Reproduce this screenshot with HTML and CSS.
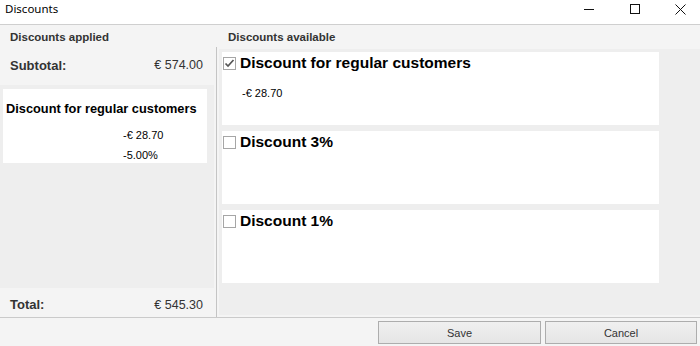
FILE: index.html
```html
<!DOCTYPE html>
<html lang="en">
<head>
  <meta charset="UTF-8">
  <title>Discounts</title>
  <link rel="stylesheet" href="styles.css">
</head>
<body>
  <div class="window">
    <div class="titlebar">
      <span class="title">Discounts</span>
      <div class="controls">
        <span class="ctl">
          <svg width="10" height="10" viewBox="0 0 10 10"><line x1="0" y1="5.5" x2="10" y2="5.5"/></svg>
        </span>
        <span class="ctl">
          <svg width="10" height="10" viewBox="0 0 10 10"><rect x="0.5" y="0.5" width="9" height="9"/></svg>
        </span>
        <span class="ctl">
          <svg width="11" height="11" viewBox="0 0 11 11"><path d="M0.5 0.5 L10.5 10.5 M10.5 0.5 L0.5 10.5"/></svg>
        </span>
      </div>
    </div>

    <div class="main">
      <!-- left: applied -->
      <div class="applied">
        <div class="head">Discounts applied</div>
        <div class="sum-row subtotal">
          <span class="sum-label">Subtotal:</span>
          <span class="sum-amount">€ 574.00</span>
        </div>
        <div class="applied-list">
          <div class="applied-card">
            <div class="applied-title">Discount for regular customers</div>
            <div class="applied-values">
              <div>-€ 28.70</div>
              <div>-5.00%</div>
            </div>
          </div>
        </div>
        <div class="sum-row total">
          <span class="sum-label">Total:</span>
          <span class="sum-amount">€ 545.30</span>
        </div>
      </div>

      <div class="splitter"><div class="splitter-line"></div></div>

      <!-- right: available -->
      <div class="available">
        <div class="head">Discounts available</div>
        <div class="available-list">
          <div class="offer">
            <div class="offer-title">
              <span class="check">
                <svg width="11" height="11" viewBox="0 0 11 11"><path d="M1.5 5.5 L4 8 L9.5 2"/></svg>
              </span>
              Discount for regular customers
            </div>
            <div class="offer-value">-€ 28.70</div>
          </div>
          <div class="offer">
            <div class="offer-title"><span class="check"></span>Discount 3%</div>
          </div>
          <div class="offer">
            <div class="offer-title"><span class="check"></span>Discount 1%</div>
          </div>
        </div>
      </div>
    </div>

    <div class="footer">
      <button class="btn btn-save">Save</button>
      <button class="btn btn-cancel">Cancel</button>
    </div>
  </div>
</body>
</html>
```

FILE: styles.css
```css
/* reset */
*{
  margin: 0;
  padding: 0;
  box-sizing: border-box;
}
body{
  font-family: "Liberation Sans", Arial, sans-serif;
  background-color: #f4f4f4;
  color: #333;
}
.window{
  width: 700px;
  height: 346px;
  display: flex;
  flex-direction: column;
  overflow: hidden;
}

/* title bar */
.titlebar{
  height: 25px;
  background-color: #fff;
  border-bottom: 1px solid #cfcfcf;
  display: flex;
  align-items: flex-start;
}
.title{
  font-family: "Noto Sans", sans-serif;
  font-size: 11.5px;
  color: #000;
  padding: 1px 0 0 5px;
  line-height: 16px;
  flex: 1;
}
.controls{
  display: flex;
}
.ctl{
  width: 46px;
  height: 18px;
  display: flex;
  justify-content: center;
  align-items: center;
  padding-left: 7px;
}
.ctl svg{
  fill: none;
  stroke: #111;
  stroke-width: 1;
}

/* main area */
.main{
  flex: 1;
  display: flex;
}
.head{
  height: 23px;
  display: flex;
  align-items: center;
  font-size: 11.5px;
  font-weight: bold;
  color: #333;
}

/* applied */
.applied{
  width: 214px;
  display: flex;
  flex-direction: column;
}
.applied .head{
  padding-left: 10px;
}
.sum-row{
  display: flex;
  justify-content: space-between;
  align-items: center;
  padding: 0 11px 0 10px;
}
.subtotal{
  height: 37px;
  padding-bottom: 3px;
}
.total{
  height: 29px;
  padding-top: 4px;
}
.sum-label{
  font-size: 13px;
  font-weight: bold;
}
.sum-amount{
  font-size: 12.5px;
}
.applied-list{
  flex: 1;
  background-color: #eee;
  padding: 4px 7px 0 3px;
}
.applied-card{
  height: 74px;
  background-color: #fff;
  padding: 12px 3px 0 3px;
  color: #000;
}
.applied-title{
  font-size: 12.8px;
  font-weight: bold;
  line-height: 16px;
  white-space: nowrap;
}
.applied-values{
  margin: 8px 0 0 117px;
  font-size: 11px;
  line-height: 20px;
}

/* splitter */
.splitter{
  width: 5px;
  display: flex;
  flex-direction: column;
}
.splitter-line{
  flex: 1;
  width: 1px;
  margin: 22px 0 0 2px;
  background-color: #c4c4c4;
}

/* available */
.available{
  flex: 1;
  display: flex;
  flex-direction: column;
  padding-bottom: 2px;
}
.available .head{
  height: 24px;
  padding: 0 0 1px 9px;
}
.available-list{
  flex: 1;
  background-color: #eee;
  padding: 3px 41px 0 3px;
  display: flex;
  flex-direction: column;
  gap: 6px;
}
.offer{
  height: 73px;
  background-color: #fff;
  padding: 2px 0 0 1px;
  color: #000;
}
.offer-title{
  display: flex;
  align-items: center;
  font-size: 15.5px;
  font-weight: bold;
  line-height: 18px;
  white-space: nowrap;
}
.check{
  width: 13px;
  height: 13px;
  border: 1px solid #a6a6a6;
  background-color: #fff;
  margin-right: 4px;
  display: flex;
  justify-content: center;
  align-items: center;
}
.check svg{
  fill: none;
  stroke: #555;
  stroke-width: 1.7;
}
.offer-value{
  margin: 14px 0 0 19px;
  font-size: 11px;
  line-height: 14px;
}

/* footer */
.footer{
  height: 29px;
  border-top: 1px solid #cacaca;
  display: flex;
  justify-content: flex-end;
  gap: 4px;
  padding: 3px 3px 0 0;
}
.btn{
  height: 23px;
  border: 1px solid #adadad;
  background: linear-gradient(#f0f0f0, #e5e5e5);
  font-family: "Liberation Sans", Arial, sans-serif;
  font-size: 11px;
  color: #333;
}
.btn-save{
  width: 163px;
}
.btn-cancel{
  width: 152px;
}
```
